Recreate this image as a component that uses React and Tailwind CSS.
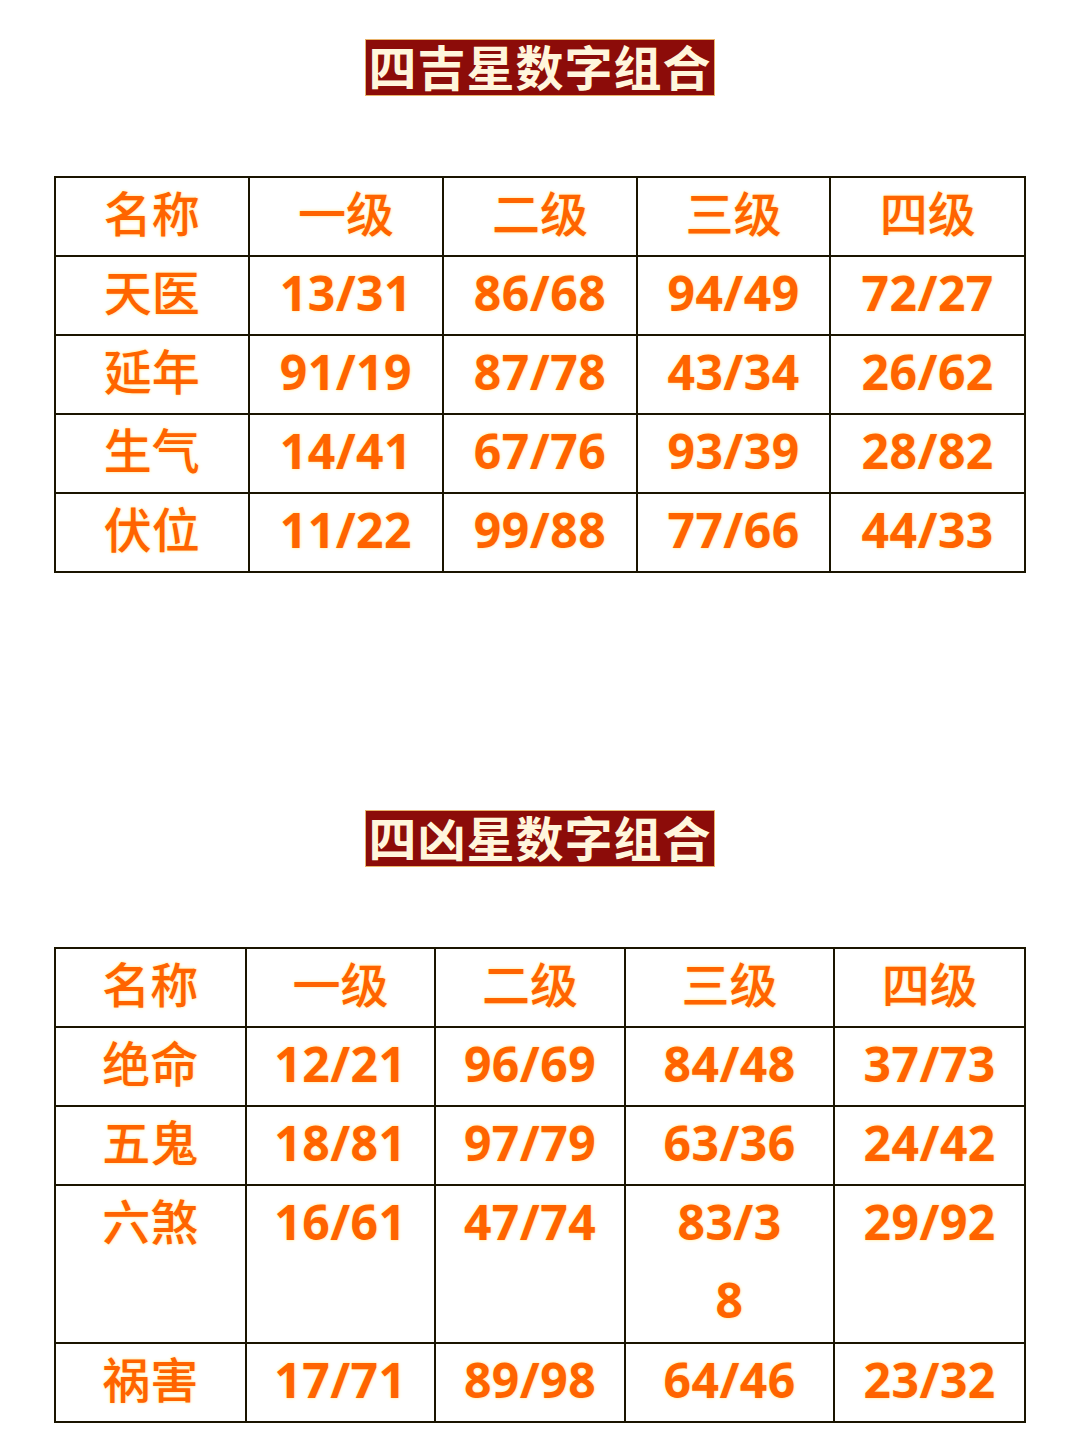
const font = { fontFamily: '"Noto Sans", "Noto Sans CJK SC", sans-serif' }

const luckyCols = ['w-[194px]', 'w-[195px]', 'w-[194px]', 'w-[194px]', 'w-[195px]']
const badCols = ['w-[191px]', 'w-[190px]', 'w-[190px]', 'w-[210px]', 'w-[191px]']

const header = ['名称', '一级', '二级', '三级', '四级']

const lucky = [
  ['天医', '13/31', '86/68', '94/49', '72/27'],
  ['延年', '91/19', '87/78', '43/34', '26/62'],
  ['生气', '14/41', '67/76', '93/39', '28/82'],
  ['伏位', '11/22', '99/88', '77/66', '44/33'],
]

const bad = [
  ['绝命', '12/21', '96/69', '84/48', '37/73'],
  ['五鬼', '18/81', '97/79', '63/36', '24/42'],
  ['六煞', '16/61', '47/74', ['83/3', '8'], '29/92'],
  ['祸害', '17/71', '89/98', '64/46', '23/32'],
]

function Banner({ children }) {
  return (
    <div className="flex justify-center">
      <div className="h-[57px] px-[2px] bg-[#8c0c09] border border-[#e9b36a] flex items-center text-[48px] leading-none font-bold text-[#fff6dc] tracking-[1px]">
        {children}
      </div>
    </div>
  )
}

function Cell({ w, tall, bold, children }) {
  return (
    <div
      className={`${w} ${tall ? 'h-[158px]' : 'h-[79px]'} border-r-2 border-b-2 border-[#1a1400] flex flex-col items-center text-[48px] leading-[78px] text-[#ff6400] ${bold ? 'font-bold tracking-[0.5px]' : 'font-medium'}`}
      style={{ textShadow: '0 0 3px #ffe27a' }}
    >
      <div className="-mt-[3px] flex flex-col items-center">{children}</div>
    </div>
  )
}

function Table({ cols, rows, tallRow }) {
  return (
    <div className="mx-[54px] w-[972px] border-t-2 border-l-2 border-[#1a1400]">
      <div className="flex">
        {header.map((h, i) => (
          <Cell key={i} w={cols[i]}>{h}</Cell>
        ))}
      </div>
      {rows.map((r, ri) => (
        <div key={ri} className="flex">
          {r.map((c, i) => (
            <Cell key={i} w={cols[i]} tall={ri === tallRow} bold={i > 0}>
              {Array.isArray(c) ? c.map((l, k) => <span key={k}>{l}</span>) : c}
            </Cell>
          ))}
        </div>
      ))}
    </div>
  )
}

export default function App() {
  return (
    <div className="w-[1080px] h-[1434px] bg-white pt-[39px] overflow-hidden" style={font}>
      <Banner>四吉星数字组合</Banner>
      <div className="mt-[80px]">
        <Table cols={luckyCols} rows={lucky} tallRow={-1} />
      </div>
      <div className="mt-[237px]">
        <Banner>四凶星数字组合</Banner>
      </div>
      <div className="mt-[80px]">
        <Table cols={badCols} rows={bad} tallRow={2} />
      </div>
    </div>
  )
}
